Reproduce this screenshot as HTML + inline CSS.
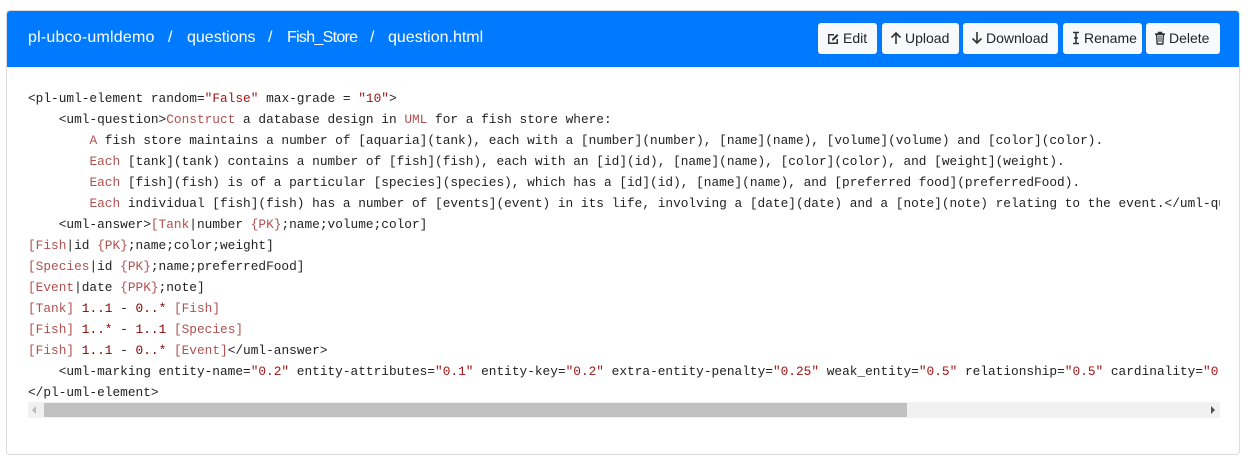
<!DOCTYPE html>
<html><head><meta charset="utf-8"><style>
*{box-sizing:border-box;margin:0;padding:0}
body{width:1253px;height:458px;background:#fff;font-family:"Liberation Sans",sans-serif;position:relative;overflow:hidden}
.card{position:absolute;left:6px;top:10px;width:1234px;height:445px;border:1px solid #dcdcdc;border-radius:4px;overflow:hidden}
.hdr{position:absolute;left:0;top:0;width:100%;height:56px;background:#007bff;color:#fff}
.c{position:absolute;top:18px;font-size:16px;white-space:pre}
.btn{position:absolute;top:12px;height:31px;background:#f8f9fa;border-radius:3px;color:#212529;font-size:14px;line-height:31px;padding-left:8px;white-space:nowrap}
.btn svg{vertical-align:-2px;margin-right:3px}
pre{position:absolute;left:21px;top:77px;width:1192px;overflow:hidden;font-family:"Liberation Mono",monospace;font-size:12.8px;line-height:21px;color:#222;white-space:pre}
.s{color:#a31515}.k{color:#b15050}.n{color:#880000}
.sb{position:absolute;left:21px;top:391px;width:1192px;height:16px;background:#f1f1f1}
.th{position:absolute;left:16px;top:1px;width:863px;height:14px;background:#c1c1c1}
</style></head><body>
<div class="card">
<div class="hdr">
<div class="c" style="left:21px;width:130px;letter-spacing:0.2px">pl-ubco-umldemo</div>
<div class="c" style="left:161px">/</div>
<div class="c" style="left:180px">questions</div>
<div class="c" style="left:261px">/</div>
<div class="c" style="left:280px;letter-spacing:-0.7px">Fish_Store</div>
<div class="c" style="left:363px">/</div>
<div class="c" style="left:381px">question.html</div>
<div class="btn" style="left:811px;width:59px"><svg width="14" height="14" viewBox="0 0 14 14"><path d="M2 3h6v1.5H3.5v7h7V8H12v5H2z" fill="#333"/><path d="M6 8l5-5 1.5 1.5-5 5H6z" fill="#333"/></svg>Edit</div>
<div class="btn" style="left:875px;width:77px"><svg width="12" height="14" viewBox="0 0 12 14"><path d="M6 2v11M1.5 6.5L6 2l4.5 4.5" stroke="#333" stroke-width="1.6" fill="none"/></svg>Upload</div>
<div class="btn" style="left:956px;width:95px"><svg width="12" height="14" viewBox="0 0 12 14"><path d="M6 1v11M1.5 7.5L6 12l4.5-4.5" stroke="#333" stroke-width="1.6" fill="none"/></svg>Download</div>
<div class="btn" style="left:1056px;width:79px"><svg width="10" height="14" viewBox="0 0 10 14"><path d="M2 1.5h6M2 12.5h6M5 1.5v11M3 7h4" stroke="#333" stroke-width="1.6" fill="none"/></svg>Rename</div>
<div class="btn" style="left:1139px;width:74px"><svg width="12" height="14" viewBox="0 0 12 14"><path d="M1 3h10M4.5 3V1.5h3V3M2.5 3.5l.7 9.5h5.6l.7-9.5z" stroke="#333" stroke-width="1.4" fill="none"/><path d="M5 5v6M7 5v6" stroke="#333"/></svg>Delete</div>
</div>
<pre>&lt;pl-uml-element random=<span class="s">"False"</span> max-grade = <span class="s">"10"</span>&gt;
    &lt;uml-question&gt;<span class="k">Construct</span> a database design in <span class="k">UML</span> for a fish store where:
        <span class="k">A</span> fish store maintains a number of [aquaria](tank), each with a [number](number), [name](name), [volume](volume) and [color](color).
        <span class="k">Each</span> [tank](tank) contains a number of [fish](fish), each with an [id](id), [name](name), [color](color), and [weight](weight).
        <span class="k">Each</span> [fish](fish) is of a particular [species](species), which has a [id](id), [name](name), and [preferred food](preferredFood).
        <span class="k">Each</span> individual [fish](fish) has a number of [events](event) in its life, involving a [date](date) and a [note](note) relating to the event.&lt;/uml-question&gt;
    &lt;uml-answer&gt;<span class="k">[Tank</span>|number <span class="k">{PK}</span>;name;volume;color]
<span class="k">[Fish</span>|id <span class="k">{PK}</span>;name;color;weight]
<span class="k">[Species</span>|id <span class="k">{PK}</span>;name;preferredFood]
<span class="k">[Event</span>|date <span class="k">{PPK}</span>;note]
<span class="k">[Tank]</span> <span class="n">1..1</span> - <span class="n">0..*</span> <span class="k">[Fish]</span>
<span class="k">[Fish]</span> <span class="n">1..*</span> - <span class="n">1..1</span> <span class="k">[Species]</span>
<span class="k">[Fish]</span> <span class="n">1..1</span> - <span class="n">0..*</span> <span class="k">[Event]</span>&lt;/uml-answer&gt;
    &lt;uml-marking entity-name=<span class="s">"0.2"</span> entity-attributes=<span class="s">"0.1"</span> entity-key=<span class="s">"0.2"</span> extra-entity-penalty=<span class="s">"0.25"</span> weak_entity=<span class="s">"0.5"</span> relationship=<span class="s">"0.5"</span> cardinality=<span class="s">"0.5"</span>/&gt;
&lt;/pl-uml-element&gt;</pre>
<div class="sb"><div style="position:absolute;left:4px;top:4px;width:0;height:0;border-top:4px solid transparent;border-bottom:4px solid transparent;border-right:4px solid #bbb"></div><div class="th"></div><div style="position:absolute;right:5px;top:4px;width:0;height:0;border-top:4px solid transparent;border-bottom:4px solid transparent;border-left:4px solid #505050"></div></div>
</div>
</body></html>
